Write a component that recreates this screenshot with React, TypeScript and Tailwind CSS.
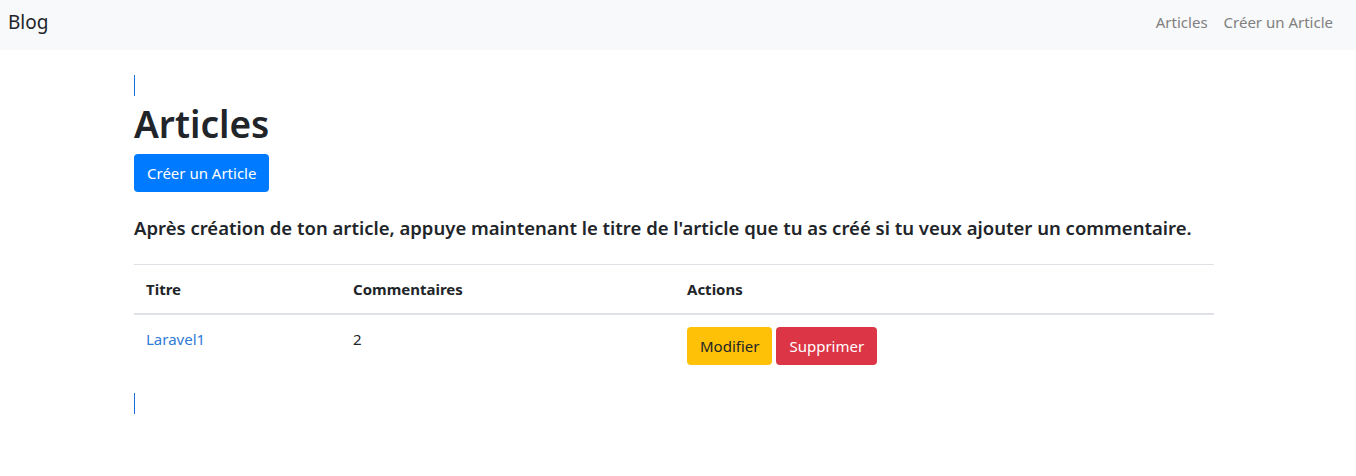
import React from 'react';

// Liste des articles, style Bootstrap 4
const articles = [{ id: 1, titre: 'Laravel1', commentaires: 2 }];

const font = "font-['Noto_Sans','Liberation_Sans',sans-serif]";

function Navbar() {
  return (
    <nav className="flex h-[50px] items-center justify-between bg-[#f8f9fa] pb-[5px] pl-[8px] pr-[23px]">
      <a className="text-[19px] leading-none text-[#212529]">Blog</a>
      <div className="flex items-center gap-[16px] text-[15px] text-[#808080]">
        <a>Articles</a>
        <a>Créer un Article</a>
      </div>
    </nav>
  );
}

function Caret() {
  return <div className="h-[21px] w-px bg-[#1a6fd8]" />;
}

export default function App() {
  return (
    <div className={`${font} min-h-[476px] bg-white text-[#212529]`}>
      <Navbar />

      <main className="ml-[134px] w-[1080px] pt-[25px]">
        <Caret />

        <h1 className="mt-[4px] text-[37px] font-semibold leading-[48px]">Articles</h1>

        <button className="mt-[6px] h-[38px] rounded-[4px] bg-[#007bff] px-[13px] text-[15px] text-white">
          Créer un Article
        </button>

        <p className="mt-[18px] text-[18.5px] font-semibold leading-[36px]">
          Après création de ton article, appuye maintenant le titre de l'article que tu as créé si tu veux ajouter un commentaire.
        </p>

        <table className="mt-[18px] w-full border-collapse text-[15px]">
          <thead>
            <tr className="border-t border-b-2 border-[#dee2e6]">
              <th className="w-[207px] px-[12px] py-[12px] text-left font-bold leading-[24px]">Titre</th>
              <th className="w-[334px] px-[12px] py-[12px] text-left font-bold leading-[24px]">Commentaires</th>
              <th className="px-[12px] py-[12px] text-left font-bold leading-[24px]">Actions</th>
            </tr>
          </thead>
          <tbody>
            {articles.map(a => (
              <tr key={a.id}>
                <td className="px-[12px] py-[12px] align-top leading-[24px]">
                  <a className="text-[#2f7bd6]">{a.titre}</a>
                </td>
                <td className="px-[12px] py-[12px] align-top leading-[24px]">{a.commentaires}</td>
                <td className="px-[12px] py-[12px] align-top">
                  <div className="flex gap-[4px]">
                    <button className="h-[38px] rounded-[4px] bg-[#ffc107] px-[13px] text-[15px] text-[#212529]">Modifier</button>
                    <button className="h-[38px] rounded-[4px] bg-[#dc3545] px-[13px] text-[15px] text-white">Supprimer</button>
                  </div>
                </td>
              </tr>
            ))}
          </tbody>
        </table>

        <div className="mt-[16px]">
          <Caret />
        </div>
      </main>
    </div>
  );
}
